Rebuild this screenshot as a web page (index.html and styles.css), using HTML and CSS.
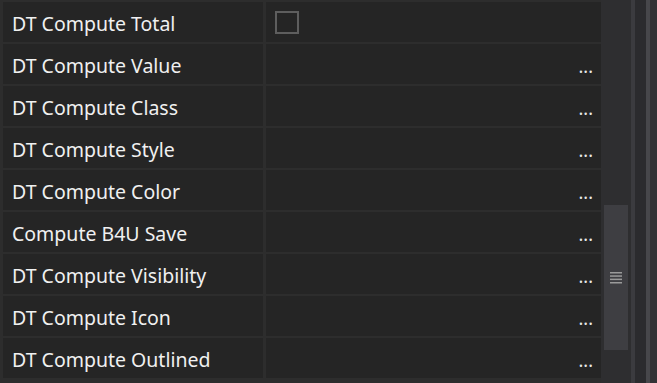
FILE: index.html
```html
<!DOCTYPE html>
<html lang="en">
<head>
    <meta charset="UTF-8">
    <title>Properties</title>
    <link rel="stylesheet" href="styles.css">
</head>
<body>
    <div class="panel">
        <div class="grid">
            <div class="name">DT Compute Total</div>
            <div class="value"><span class="check"></span></div>

            <div class="name">DT Compute Value</div>
            <div class="value"><span class="more">...</span></div>

            <div class="name">DT Compute Class</div>
            <div class="value"><span class="more">...</span></div>

            <div class="name">DT Compute Style</div>
            <div class="value"><span class="more">...</span></div>

            <div class="name">DT Compute Color</div>
            <div class="value"><span class="more">...</span></div>

            <div class="name">Compute B4U Save</div>
            <div class="value"><span class="more">...</span></div>

            <div class="name">DT Compute Visibility</div>
            <div class="value"><span class="more">...</span></div>

            <div class="name">DT Compute Icon</div>
            <div class="value"><span class="more">...</span></div>

            <div class="name">DT Compute Outlined</div>
            <div class="value"><span class="more">...</span></div>
        </div>

        <div class="scrollbar">
            <div class="thumb">
                <svg width="12" height="12" viewBox="0 0 12 12">
                    <rect x="0" y="0" width="12" height="1.5" fill="#9a9a9a"/>
                    <rect x="0" y="3.3" width="12" height="1.5" fill="#9a9a9a"/>
                    <rect x="0" y="6.6" width="12" height="1.5" fill="#9a9a9a"/>
                    <rect x="0" y="10" width="12" height="1.5" fill="#9a9a9a"/>
                </svg>
            </div>
        </div>

        <div class="edge"></div>
    </div>
</body>
</html>
```

FILE: styles.css
```css
body {
    margin: 0;
    background-color: #2d2d2d;
    font-family: 'Noto Sans', 'Open Sans', sans-serif;
    overflow: hidden;
}

.panel {
    display: flex;
    height: 383px;
}

.grid {
    width: 598px;
    display: grid;
    grid-template-columns: 260px 335px;
    grid-auto-rows: 40px;
    column-gap: 3px;
    row-gap: 2px;
    padding: 2px 0 0 3px;
    background-color: #2d2d2d;
    align-content: start;
}

.name,
.value {
    background-color: #252525;
}

.name {
    color: #f0f0f0;
    font-size: 19.5px;
    line-height: 36px;
    padding: 4px 0 0 9px;
    white-space: nowrap;
}

.value {
    display: flex;
    align-items: center;
    justify-content: flex-end;
    position: relative;
}

.check {
    position: absolute;
    left: 9px;
    top: 9px;
    width: 20px;
    height: 19px;
    border: 2px solid #5e5e5e;
}

.more {
    color: #e8e8e8;
    font-size: 18px;
    line-height: 18px;
    align-self: flex-end;
    margin: 0 8px 9px 0;
}

.scrollbar {
    width: 30px;
    background-color: #2e2e30;
    padding-top: 205px;
    box-sizing: border-box;
}

.thumb {
    width: 24px;
    height: 145px;
    margin-left: 3px;
    background-color: #3e3e42;
    display: flex;
    align-items: center;
    justify-content: center;
}

.edge {
    flex: 1;
    background: linear-gradient(to right,
        #3b3b3f 0, #3b3b3f 4px,
        #2b2b2e 4px, #2b2b2e 15px,
        #47474b 15px, #47474b 19px,
        #333336 19px);
}
```
